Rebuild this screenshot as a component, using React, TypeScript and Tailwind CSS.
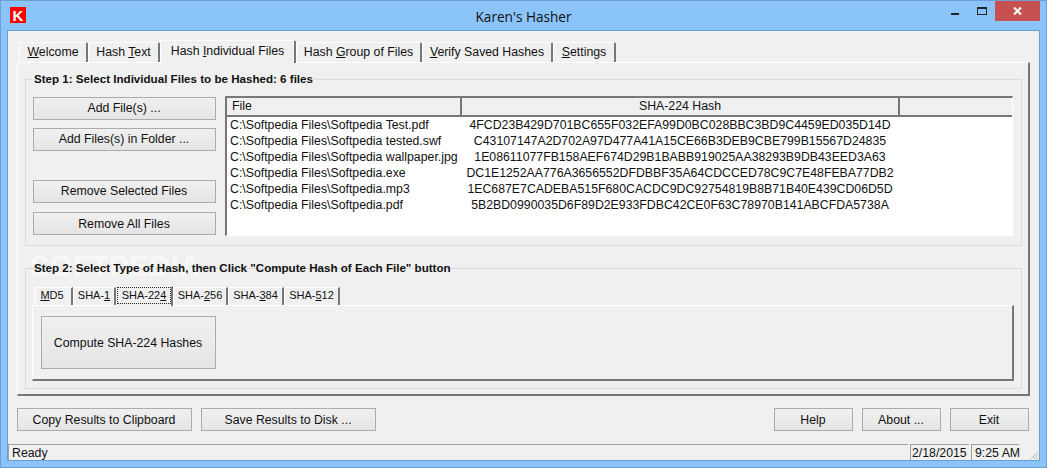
import React from 'react';

const font = { fontFamily: '"Liberation Sans", Arial, sans-serif' };

const mainTabs = [
  { pre: '', key: 'W', post: 'elcome', w: 'w-[69px]' },
  { pre: 'Hash ', key: 'T', post: 'ext', w: 'w-[72px]' },
  { pre: 'Hash ', key: 'I', post: 'ndividual Files', active: true, w: 'w-[136px]' },
  { pre: 'Hash ', key: 'G', post: 'roup of Files', w: 'w-[126px]' },
  { pre: '', key: 'V', post: 'erify Saved Hashes', w: 'w-[131px]' },
  { pre: '', key: 'S', post: 'ettings', w: 'w-[63px]' },
];

const hashTabs = [
  { pre: '', key: 'M', post: 'D5', w: 'w-[38px] pr-[3px]' },
  { pre: 'SHA-', key: '1', post: '', w: 'w-[43px]' },
  { pre: 'SHA-22', key: '4', post: '', active: true, w: 'w-[57px]' },
  { pre: 'SHA-', key: '2', post: '56', w: 'w-[55px]' },
  { pre: 'SHA-', key: '3', post: '84', w: 'w-[56px]' },
  { pre: 'SHA-', key: '5', post: '12', w: 'w-[56px]' },
];

const files = [
  ['C:\\Softpedia Files\\Softpedia Test.pdf', '4FCD23B429D701BC655F032EFA99D0BC028BBC3BD9C4459ED035D14D'],
  ['C:\\Softpedia Files\\Softpedia tested.swf', 'C43107147A2D702A97D477A41A15CE66B3DEB9CBE799B15567D24835'],
  ['C:\\Softpedia Files\\Softpedia wallpaper.jpg', '1E08611077FB158AEF674D29B1BABB919025AA38293B9DB43EED3A63'],
  ['C:\\Softpedia Files\\Softpedia.exe', 'DC1E1252AA776A3656552DFDBBF35A64CDCCED78C9C7E48FEBA77DB2'],
  ['C:\\Softpedia Files\\Softpedia.mp3', '1EC687E7CADEBA515F680CACDC9DC92754819B8B71B40E439CD06D5D'],
  ['C:\\Softpedia Files\\Softpedia.pdf', '5B2BD0990035D6F89D2E933FDBC42CE0F63C78970B141ABCFDA5738A'],
];

function Btn({ label, className }: { label: string; className: string }) {
  return (
    <button className={`border border-[#acacac] bg-gradient-to-b from-[#f0f0f0] to-[#e5e5e5] pr-px text-[12.3px] text-[#111] ${className}`}>
      {label}
    </button>
  );
}

export default function App() {
  return (
    <div className="flex h-[468px] w-[1047px] flex-col overflow-hidden border border-[#6f9fd0] bg-[#8bc4fa] text-[12.3px] text-[#111]" style={font}>
      {/* Title bar */}
      <div className="flex h-[29px] shrink-0 items-start">
        <div className="ml-[9px] mt-[6px] flex h-4 w-4 items-center justify-center bg-[#fd0000] text-[15px] font-bold leading-none text-white">K</div>
        <div className="flex-1 pl-[70px] pt-[6px] text-center text-[13.6px] leading-5 text-[#111]" style={{ fontFamily: '"Open Sans", sans-serif' }}>Karen's Hasher</div>
        <div className="mr-[18px] mt-[12px] h-[2px] w-2 bg-[#222]" />
        <div className="mr-[8px] pt-[6px]">
          <svg className="block" width="10" height="8" viewBox="0 0 10 8"><rect x="0.5" y="0.5" width="9" height="7" fill="none" stroke="#222" /><rect x="0" y="0" width="10" height="2" fill="#222" /></svg>
        </div>
        <div className="mr-[6px] flex h-5 w-[45px] items-center justify-center bg-[#c75050]">
          <svg width="9" height="8" viewBox="0 0 9 8"><path d="M1 0.5 L8 7.5 M8 0.5 L1 7.5" stroke="#fff" strokeWidth="2" /></svg>
        </div>
      </div>

      {/* Client area */}
      <div className="mx-[6px] flex min-h-0 flex-1 flex-col border border-[#6a9ed2] bg-[#f0f0f0]">
        <div className="flex-1 pl-[9px] pr-[9px] pt-[9px]">
          {/* Main tabs */}
          <div className="relative z-10 flex h-[22px] items-end pl-[2px]">
            {mainTabs.map(t => (
              <div
                key={t.key}
                className={`flex items-center justify-center rounded-t-[2px] border-l border-t border-r-2 border-l-white border-t-white border-r-[#777] bg-[#f0f0f0] ${t.w} ${t.active ? 'h-[23px] -mb-px' : 'h-[20px]'}`}
              >
                <span className="whitespace-pre pb-px">{t.pre}<u>{t.key}</u>{t.post}</span>
              </div>
            ))}
          </div>

          {/* Main panel */}
          <div className="h-[334px] border-l border-t border-l-white border-t-white border-r-2 border-b-2 border-r-[#777] border-b-[#777] pl-[7px] pr-[6px] pt-[16px]">
            {/* Step 1 */}
            <div className="relative h-[167px] border border-[#dcdcdc] pl-[7px] pt-[17px]">
              <div className="absolute -top-[8px] left-[7px] bg-[#f0f0f0] px-[1px] text-[11.6px] font-bold leading-[14px]">Step 1: Select Individual Files to be Hashed: 6 files</div>
              <div className="flex gap-[9px]">
                <div className="flex w-[183px] flex-col">
                  <Btn label="Add File(s) ..." className="h-[23px]" />
                  <Btn label="Add Files(s) in Folder ..." className="mt-[8px] h-[23px]" />
                  <Btn label="Remove Selected Files" className="mt-[29px] h-[23px]" />
                  <Btn label="Remove All Files" className="mt-[9px] h-[23px] pt-[2px]" />
                </div>
                <div className="-mt-px h-[140px] w-[788px] border-l-2 border-t-2 border-l-[#777] border-t-[#777] border-r border-b border-r-white border-b-white bg-white">
                  <div className="flex h-[19px] bg-[#f0f0f0] leading-[17px]">
                    <div className="w-[235px] border-r-2 border-b-2 border-r-[#777] border-b-[#777] pl-[5px]">File</div>
                    <div className="w-[438px] border-r-2 border-b-2 border-r-[#777] border-b-[#777] text-center">SHA-224 Hash</div>
                    <div className="flex-1 border-b-2 border-b-[#777]" />
                  </div>
                  <div>
                    {files.map(([name, hash]) => (
                      <div key={hash} className="flex h-4 leading-4">
                        <div className="w-[235px] whitespace-nowrap pl-[3px]">{name}</div>
                        <div className="w-[436px] whitespace-nowrap text-center">{hash}</div>
                      </div>
                    ))}
                  </div>
                </div>
              </div>
            </div>

            {/* Step 2 */}
            <div className="relative mt-[22px] h-[121px] border border-[#dcdcdc] pl-[6px] pt-[17px]">
              <div className="absolute -top-[18px] left-[4px] text-[29px] font-bold leading-[30px] tracking-[0.5px] text-white/60">SOFTPEDIA</div>
              <div className="absolute -top-[8px] left-[7px] px-[1px] text-[11.6px] font-bold leading-[14px]">Step 2: Select Type of Hash, then Click "Compute Hash of Each File" button</div>
              <div className="relative z-10 flex h-[19px] items-end pl-[3px] text-[11px]">
                {hashTabs.map(t => (
                  <div
                    key={t.key + t.pre}
                    className={`flex items-center justify-center border-l border-t border-r-2 border-l-white border-t-white border-r-[#777] bg-[#f0f0f0] ${t.w} ${t.active ? 'h-[20px] -mb-px' : 'h-[18px]'}`}
                  >
                    {t.active ? (
                      <span className="mb-[2px] flex h-[17px] w-[54px] items-center justify-center whitespace-pre border border-dotted border-[#222] pb-px">{t.pre}<u>{t.key}</u>{t.post}</span>
                    ) : (
                      <span className="whitespace-pre pb-[3px]">{t.pre}<u>{t.key}</u>{t.post}</span>
                    )}
                  </div>
                ))}
              </div>
              <div className="h-[76px] w-[982px] border-l border-t border-l-white border-t-white border-r-2 border-b-2 border-r-[#777] border-b-[#777] pl-[8px] pt-[10px]">
                <Btn label="Compute SHA-224 Hashes" className="h-[53px] w-[175px] pt-[2px]" />
              </div>
            </div>
          </div>

          {/* Bottom buttons */}
          <div className="mr-px mt-[12px] flex">
            <Btn label="Copy Results to Clipboard" className="h-[23px] w-[175px] pt-[2px]" />
            <Btn label="Save Results to Disk ..." className="ml-[9px] h-[23px] w-[175px] pt-[2px]" />
            <div className="flex-1" />
            <Btn label="Help" className="h-[23px] w-[79px] pt-[2px]" />
            <Btn label="About ..." className="ml-[9px] h-[23px] w-[79px] pt-[2px]" />
            <Btn label="Exit" className="ml-[9px] h-[23px] w-[79px] pt-[2px]" />
          </div>
        </div>

        {/* Status bar */}
        <div className="flex h-[16px] shrink-0 items-stretch whitespace-nowrap leading-[16px]">
          <div className="flex-1 border-l border-t border-l-[#a0a0a0] border-t-[#a0a0a0] pl-[3px]">Ready</div>
          <div className="ml-[2px] w-[59px] border-l border-t border-l-[#a0a0a0] border-t-[#a0a0a0] pl-[1px]">2/18/2015</div>
          <div className="ml-[2px] w-[48px] border-l border-t border-l-[#a0a0a0] border-t-[#a0a0a0] pl-[3px]">9:25 AM</div>
          <div className="flex w-[20px] items-end justify-end">
            <svg width="10" height="10" viewBox="0 0 10 10"><path d="M9 2 L2 9 M9 5 L5 9 M9 8 L8 9" stroke="#b0b0b0" /></svg>
          </div>
        </div>
      </div>
      <div className="h-[6px] shrink-0" />
    </div>
  );
}
